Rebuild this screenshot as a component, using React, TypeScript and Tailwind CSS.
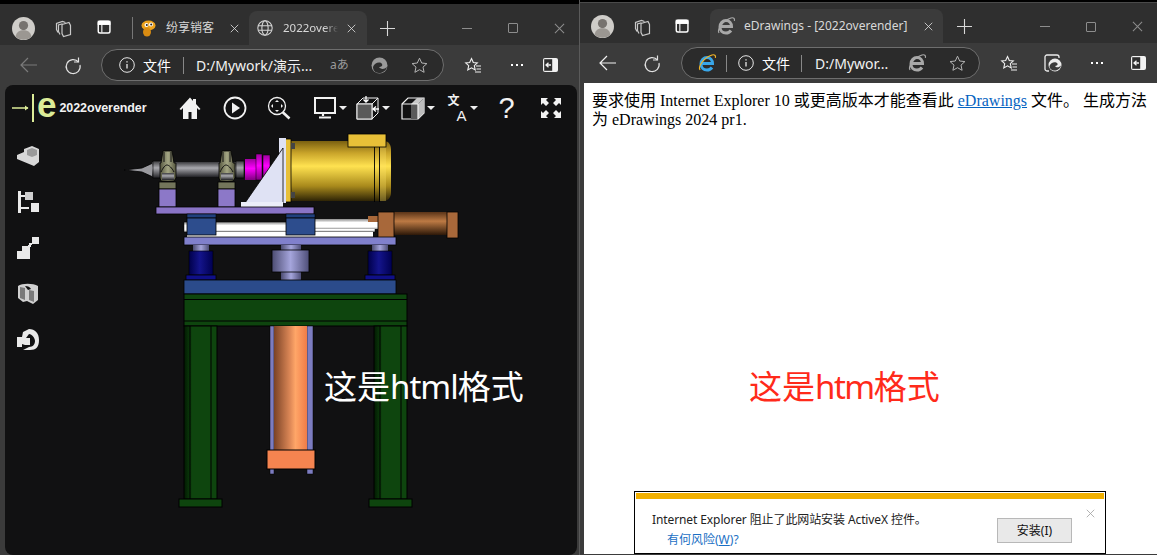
import type { ReactNode } from 'react';

const UI = '"Noto Sans", "Noto Sans CJK SC", sans-serif';

function Svg({ size = 20, children, className = '' }: { size?: number; children: ReactNode; className?: string }) {
  return (
    <svg width={size} height={size} viewBox="0 0 20 20" fill="none" stroke="currentColor" strokeWidth="1.2" className={`shrink-0 ${className}`}>
      {children}
    </svg>
  );
}

function Avatar() {
  return (
    <svg width="23" height="23" viewBox="0 0 23 23" className="shrink-0">
      <circle cx="11.5" cy="11.5" r="11.5" fill="#cfcdc9" />
      <circle cx="11.5" cy="8.6" r="4.6" fill="#77736f" />
      <path d="M3.5 19.5c1-4.8 4.4-6.3 8-6.3s7 1.5 8 6.3a11.5 11.5 0 0 1-16 0z" fill="#9b9792" />
    </svg>
  );
}

const Workspaces = () => (
  <Svg className="text-[#c9c9c9]">
    <path d="M9 6.5l7-2 1.5 3v9l-7 2-1.5-3z" />
    <path d="M5 14.5l-1.5-3v-6l6-2 3 1M7 16.5l-1.500-3v-6.500l4-1.300" />
  </Svg>
);

const VerticalTabs = () => (
  <Svg className="text-white" size={18}>
    <rect x="2.500" y="2.500" width="13" height="13" rx="2" strokeWidth="1.600" />
    <rect x="2.500" y="2.500" width="13" height="3.500" fill="currentColor" />
    <path d="M6.500 5v10" strokeWidth="1.200" />
  </Svg>
);

const CloseX = ({ size = 12, className = '' }: { size?: number; className?: string }) => (
  <svg width={size} height={size} viewBox="0 0 12 12" stroke="currentColor" strokeWidth="1.100" className={`shrink-0 ${className}`}>
    <path d="M1 1l10 10M11 1L1 11" />
  </svg>
);

const Plus = () => (
  <svg width="15" height="15" viewBox="0 0 15 15" stroke="#d8d8d8" strokeWidth="1.100" className="shrink-0">
    <path d="M7.500 0v15M0 7.500h15" />
  </svg>
);

function WindowControls() {
  return (
    <div className="ml-auto flex items-center text-[#8d8d8d]">
      <div className="h-px w-[10px] bg-[#8d8d8d]" />
      <div className="ml-[36px] h-[10px] w-[10px] rounded-[1px] border border-[#8d8d8d]" />
      <CloseX size={11} className="ml-[36px] mr-[14px]" />
    </div>
  );
}

const Back = ({ color }: { color: string }) => (
  <svg width="18" height="16" viewBox="0 0 18 16" fill="none" stroke={color} strokeWidth="1.200" className="shrink-0">
    <path d="M1 8h16M8 1L1 8l7 7" />
  </svg>
);

const Refresh = () => (
  <Svg size={20} className="text-[#e2e2e2]">
    <path d="M15.500 2.500v4.500h-4.500" />
    <path d="M15.500 7A7 7 0 1 0 17 10" />
  </Svg>
);

const Info = () => (
  <svg width="16" height="16" viewBox="0 0 16 16" fill="none" stroke="#e8e8e8" strokeWidth="1" className="shrink-0">
    <circle cx="8" cy="8" r="7.300" />
    <path d="M8 7v4.500M8 4.300v1.200" strokeWidth="1.300" />
  </svg>
);

const Star = () => (
  <svg width="17" height="17" viewBox="0 0 17 17" fill="none" stroke="#b4b4b4" strokeWidth="1" className="shrink-0">
    <path d="M8.500 1.200l2.200 4.800 5.200.6-3.900 3.500 1.100 5.200-4.600-2.600-4.600 2.600 1.100-5.200L1.100 6.600l5.200-.6z" />
  </svg>
);

const Favorites = () => (
  <svg width="18" height="17" viewBox="0 0 18 17" fill="none" stroke="#f0f0f0" strokeWidth="1.100" className="shrink-0">
    <path d="M7.500 1.500l1.800 4 4 .4-3 2.800.9 4.200-3.700-2.100-3.700 2.100.9-4.200-3-2.800 4-.4z" />
    <path d="M12 9h5M12.500 12h4.500M11 15h6" />
  </svg>
);

const Dots = () => (
  <div className="flex shrink-0 gap-[3px]">
    <div className="h-[2px] w-[2px] bg-white" />
    <div className="h-[2px] w-[2px] bg-white" />
    <div className="h-[2px] w-[2px] bg-white" />
  </div>
);

const SidebarToggle = () => (
  <svg width="15" height="14" viewBox="0 0 15 14" className="shrink-0">
    <rect x="0" y="0" width="15" height="14" rx="2" fill="#f2f2f2" />
    <rect x="1.200" y="1.200" width="8" height="11.600" fill="#2e2e2e" />
    <path d="M3 7h5M5.500 4.800L3 7l2.500 2.200" stroke="#f2f2f2" strokeWidth="1.300" fill="none" />
  </svg>
);

const EdgeSwirl = ({ size = 17, color = '#9a9a9a' }: { size?: number; color?: string }) => (
  <svg width={size} height={size} viewBox="0 0 17 17" className="shrink-0">
    <circle cx="8.500" cy="8.500" r="8" fill={color} />
    <path d="M2 10c1-4 7-6 9-3 1 2-1 3-3 3 1 2 5 3 8 0-1 4-5 6-8 6-4 0-6-3-6-6z" fill="#2c2c2c" />
  </svg>
);

const Collections = () => (
  <svg width="20" height="20" viewBox="0 0 20 20" className="shrink-0">
    <path d="M6 18H4a2 2 0 0 1-2-2V4a2 2 0 0 1 2-2h10a2 2 0 0 1 2 2v1" fill="none" stroke="#ececec" strokeWidth="1.300" />
    <circle cx="12" cy="12" r="6.500" fill="#ececec" />
    <path d="M6.500 13c1-3.500 6-5 8-2.500.7 1.600-1 2.500-2.500 2.500 1 1.600 4 2 6-.5-.8 3.500-4 5-6 5-3.500 0-5.500-2-5.500-4.500z" fill="#3b3b3b" />
  </svg>
);

const IeLetter = ({ colored = false }: { colored?: boolean }) => (
  <svg width="20" height="20" viewBox="0 0 20 20" fill="none" className="shrink-0">
    <path d="M4.500 10.500h11c0-3.500-2.300-6-5.500-6s-6 2.700-6 6.500 2.700 6 6 6c2.200 0 3.800-.9 5-2.500" stroke={colored ? '#39a6e8' : '#a8a8a8'} strokeWidth="3" />
    <path d="M3 17C1 14 6 5 15 2c2.500-.8 4 .3 3.400 2.800" stroke={colored ? '#f0b429' : '#a8a8a8'} strokeWidth="1.200" />
  </svg>
);

const Globe = () => (
  <Svg size={18} className="text-[#d4d4d4]">
    <circle cx="10" cy="10" r="8" />
    <ellipse cx="10" cy="10" rx="3.500" ry="8" />
    <path d="M2.500 7.500h15M2.500 12.500h15" />
  </Svg>
);

const Mascot = () => (
  <svg width="16" height="18" viewBox="0 0 16 18" className="shrink-0">
    <ellipse cx="8.500" cy="6.500" rx="7" ry="5" fill="#eda21c" />
    <ellipse cx="7" cy="13" rx="4" ry="4.500" fill="#d98c12" />
    <circle cx="6.500" cy="6" r="2" fill="#fff" />
    <circle cx="11" cy="5.500" r="2" fill="#fff" />
    <circle cx="6.800" cy="6" r="1" fill="#222" />
    <circle cx="11.200" cy="5.500" r="1" fill="#222" />
  </svg>
);

const Caret = () => <div className="ml-[2px] h-0 w-0 border-x-[4px] border-t-[4px] border-x-transparent border-t-[#eee]" />;

function ToolIcon({ children, caret, className = '' }: { children: ReactNode; caret?: boolean; className?: string }) {
  return (
    <div className={`flex items-center ${className}`}>
      {children}
      {caret && <Caret />}
    </div>
  );
}

function CanvasToolbar() {
  return (
    <div className="flex h-[46px] items-center text-[#f2f2f2]">
      <svg width="17" height="8" viewBox="0 0 17 8" fill="none" stroke="#dcec98" strokeWidth="1.300" className="ml-[7px] shrink-0">
        <path d="M0 4h16" />
        <path d="M13 1.500L16.500 4 13 6.500z" fill="#dcec98" stroke="none" />
      </svg>
      <div className="ml-[3px] h-[28px] w-[2px] bg-[#dcec98]" />
      <span className="ml-[3px] text-[35px] leading-none font-bold text-[#dcec98] [font-family:'Liberation_Sans',sans-serif]" style={{ marginTop: -8 }}>
        e
      </span>
      <span className="ml-[3px] w-[87px] text-[12.500px] font-bold tracking-[-0.1px] [font-family:'Liberation_Sans',sans-serif]">2022overender</span>

      <ToolIcon className="ml-[32px]">
        <svg width="24" height="24" viewBox="0 0 24 24" fill="currentColor">
          <path d="M12 1.500L1.500 13l1.500 1L5 12v11h5.500v-7h3v7H19V12l2 2 1.500-1L18 8V3h-3v2z" />
        </svg>
      </ToolIcon>
      <ToolIcon className="ml-[21px]">
        <svg width="24" height="24" viewBox="0 0 24 24" fill="none" stroke="currentColor" strokeWidth="1.800">
          <circle cx="12" cy="12" r="10.500" />
          <path d="M9 6.500l8 5.500-8 5.500z" fill="currentColor" stroke="none" />
        </svg>
      </ToolIcon>
      <ToolIcon className="ml-[20px]">
        <svg width="24" height="24" viewBox="0 0 24 24" fill="none" stroke="currentColor" strokeWidth="1.300">
          <circle cx="10" cy="10" r="8.500" />
          <path d="M15.500 16l7 6.500" strokeWidth="2.600" />
          <path d="M10 4l-2 2h4zM10 16l-2-2h4zM4 10l2-2v4zM16 10l-2-2v4z" fill="currentColor" stroke="none" />
        </svg>
      </ToolIcon>
      <ToolIcon caret className="ml-[23px]">
        <svg width="23" height="22" viewBox="0 0 23 22" fill="none" stroke="currentColor">
          <rect x="1" y="1" width="20" height="15" strokeWidth="2" />
          <path d="M9 16v3M5 20.500h12" strokeWidth="2.200" />
        </svg>
      </ToolIcon>
      <ToolIcon caret className="ml-[9px]">
        <svg width="24" height="24" viewBox="0 0 24 24" fill="none" stroke="currentColor" strokeWidth="1">
          <path d="M1 8h15v15H1zM1 8l6-6h15v15l-6 6M16 8l6-6" />
          <rect x="1" y="8" width="15" height="15" fill="#5a5a5a" />
          <path d="M10 0v6M7.500 3.500L10 6l2.500-2.500M23 13h-6M20 10.500L17 13l3 2.500" strokeWidth="1.300" stroke="#fff" />
        </svg>
      </ToolIcon>
      <ToolIcon caret className="ml-[11px]">
        <svg width="24" height="24" viewBox="0 0 24 24" fill="none" stroke="currentColor" strokeWidth="1.200">
          <path d="M1 8l6-6h16v15l-6 6H1z" />
          <path d="M10 8h7v15h-7z" fill="#5a5a5a" stroke="none" />
          <path d="M17 8l6-6v15l-6 6z" fill="#bdbdbd" stroke="none" />
          <path d="M10 8l6-6h7l-6 6z" fill="#c8c8c8" stroke="none" />
          <path d="M1 8h16v15" />
        </svg>
      </ToolIcon>
      <ToolIcon caret className="ml-[12px]">
        <span className="relative block h-[24px] w-[21px]" style={{ fontFamily: UI }}>
          <span className="absolute top-[-2px] left-0 text-[12px] leading-[14px] font-bold">文</span>
          <span className="absolute bottom-[-3px] left-[9px] text-[15px] leading-[15px] [font-family:'Liberation_Sans',sans-serif]">A</span>
        </span>
      </ToolIcon>
      <span className="ml-[20px] text-[29px] leading-none [font-family:'Liberation_Sans',sans-serif]">?</span>
      <ToolIcon className="ml-[26px]">
        <svg width="20" height="20" viewBox="0 0 20 20" fill="currentColor">
          <path d="M0 0h7L5 2l3 3-3 3-3-3-2 2zM20 0v7l-2-2-3 3-3-3 3-3-2-2zM0 20v-7l2 2 3-3 3 3-3 3 2 2zM20 20h-7l2-2-3-3 3-3 3 3 2-2z" />
        </svg>
      </ToolIcon>
    </div>
  );
}

function SideIcons() {
  return (
    <div className="box-content flex w-[22px] flex-col items-center gap-[24px] pt-[14px] pl-[12px] text-[#e9e9e9]">
      <svg width="22" height="22" viewBox="0 0 22 22" fill="currentColor">
        <path d="M0 10l7-3V4l8-3 7 3v13l-5 4L0 14z" fill="#d8d8d8" />
        <path d="M10 5l5-2 5 2v5l-5 2-5-2z" fill="#9a9a9a" />
      </svg>
      <svg width="22" height="22" viewBox="0 0 22 22" fill="currentColor">
        <path d="M1 0h3v4h4v2H4v10h8v2H4v4H1z" />
        <path d="M8 1h8v8H8z" fill="#cfcfcf" />
        <path d="M14 12h8v9h-8z" />
      </svg>
      <svg width="22" height="22" viewBox="0 0 22 22" fill="currentColor">
        <path d="M0 14h5v-5h8v13H0z" />
        <path d="M15 0h7v7h-7zM12 6h3v2h-1v2h-3V8h1z" />
      </svg>
      <svg width="22" height="22" viewBox="0 0 22 22">
        <path d="M1 3c4-3 15-3 20 0v14l-5 4-6-3-4 1-5-4z" fill="#d0d0d0" />
        <path d="M3 4l5 1v12l-5-2zM12 7l5 1v11l-5-2z" fill="#7a7a7a" />
        <path d="M8 3c3 0 5 1 6 3l-3 1z" fill="#111" />
      </svg>
      <svg width="22" height="22" viewBox="0 0 22 22" fill="currentColor">
        <path d="M0 8h5l1-5 6-3c6 0 10 4 10 11s-3 10-9 10H6l6-3c4 0 6-3 6-6s-3-7-6-7l-3 4h4v7H8l-3-1v3H0z" />
      </svg>
    </div>
  );
}

function Machine() {
  const dark = '#000';
  return (
    <svg className="absolute top-0 left-0" width="572" height="470" viewBox="5 85 572 470">
      <defs>
        <linearGradient id="gold" x1="0" y1="0" x2="0" y2="1">
          <stop offset="0" stopColor="#7a6010" />
          <stop offset=".2" stopColor="#c9a42a" />
          <stop offset=".42" stopColor="#ffe250" />
          <stop offset=".75" stopColor="#a98a1c" />
          <stop offset="1" stopColor="#2e2406" />
        </linearGradient>
        <linearGradient id="steel" x1="0" y1="0" x2="0" y2="1">
          <stop offset="0" stopColor="#3b3b3e" />
          <stop offset=".4" stopColor="#a9a9ae" />
          <stop offset="1" stopColor="#222226" />
        </linearGradient>
        <linearGradient id="magenta" x1="0" y1="0" x2="0" y2="1">
          <stop offset="0" stopColor="#a000a0" />
          <stop offset=".45" stopColor="#ff00ff" />
          <stop offset="1" stopColor="#800080" />
        </linearGradient>
        <linearGradient id="white" x1="0" y1="0" x2="0" y2="1">
          <stop offset="0" stopColor="#8a8a8a" />
          <stop offset=".35" stopColor="#ffffff" />
          <stop offset=".8" stopColor="#ffffff" />
          <stop offset="1" stopColor="#9a9a9a" />
        </linearGradient>
        <linearGradient id="copper" x1="0" y1="0" x2="0" y2="1">
          <stop offset="0" stopColor="#5a3418" />
          <stop offset=".4" stopColor="#bd7a44" />
          <stop offset="1" stopColor="#2c1808" />
        </linearGradient>
        <linearGradient id="navy" x1="0" y1="0" x2="1" y2="0">
          <stop offset="0" stopColor="#00004a" />
          <stop offset=".45" stopColor="#14148c" />
          <stop offset="1" stopColor="#000050" />
        </linearGradient>
        <linearGradient id="lilac" x1="0" y1="0" x2="1" y2="0">
          <stop offset="0" stopColor="#4c4c72" />
          <stop offset=".5" stopColor="#a5a5dc" />
          <stop offset="1" stopColor="#4e4e78" />
        </linearGradient>
        <linearGradient id="orange" x1="0" y1="0" x2="1" y2="0">
          <stop offset="0" stopColor="#7a4226" />
          <stop offset=".5" stopColor="#e08a58" />
          <stop offset=".65" stopColor="#ffa668" />
          <stop offset="1" stopColor="#f07c48" />
        </linearGradient>
        <linearGradient id="greenV" x1="0" y1="0" x2="1" y2="0">
          <stop offset="0" stopColor="#021a02" />
          <stop offset=".25" stopColor="#0e450e" />
          <stop offset="1" stopColor="#0e450e" />
        </linearGradient>
        <linearGradient id="olive" x1="0" y1="0" x2="1" y2="0">
          <stop offset="0" stopColor="#55563f" />
          <stop offset=".5" stopColor="#a4a684" />
          <stop offset="1" stopColor="#55563f" />
        </linearGradient>
      </defs>

      {/* spindle */}
      <path d="M124 170l18-2 11-5v14l-11-5z" fill="#9a9a9f" stroke={dark} strokeWidth=".8" />
      <rect x="152" y="162" width="92" height="15" fill="url(#steel)" />
      <rect x="153" y="161" width="10" height="17" fill="url(#steel)" stroke={dark} strokeWidth=".6" />
      <rect x="236" y="161" width="8" height="17" fill="url(#steel)" stroke={dark} strokeWidth=".6" />
      <rect x="245" y="159" width="11" height="21" fill="url(#magenta)" />
      <rect x="256" y="154" width="6" height="26" fill="url(#magenta)" stroke={dark} strokeWidth=".5" />
      <rect x="263" y="155" width="7" height="24" fill="url(#magenta)" stroke={dark} strokeWidth=".5" />

      {/* bearing blocks */}
      {[160, 219].map((x) => (
        <g key={x}>
          <path d={`M${x + 3} 151h9l2 12h2v15l-2 3h-13l-1-3v-15h1z`} fill="url(#olive)" stroke={dark} strokeWidth=".8" />
          <path d={`M${x + 1} 172c2-4 4-7 6-7s5 3 7 7M${x + 4} 152v10M${x + 11} 152v10`} fill="none" stroke="#111" strokeWidth="1" />
          <rect x={x + 2} y="173" width="12" height="7" fill="url(#steel)" />
          <rect x={x - 1} y="182" width="17" height="7" fill="#73755b" stroke={dark} strokeWidth=".8" />
          <rect x={x - 1} y="189" width="17" height="18" fill="#8c78c8" stroke={dark} strokeWidth=".8" />
        </g>
      ))}

      {/* motor */}
      <path d="M290 141h94c5 0 7 4 7 9v43c0 5-4 8-7 8h-94z" fill="url(#gold)" />
      <rect x="380" y="141" width="6" height="60" fill="#ffe36b" opacity=".3" />
      <path d="M374.500 147v55M379.500 147v55" stroke={dark} strokeWidth=".9" />
      <rect x="348" y="134" width="38" height="13" fill="#e8c038" stroke={dark} strokeWidth=".8" />
      <rect x="285" y="139" width="6" height="63" fill="#e8c038" stroke={dark} strokeWidth=".8" />
      <rect x="279" y="138" width="7" height="65" fill="#dfe2f4" />
      <rect x="291" y="143" width="4" height="6" fill="#444" />
      <rect x="291" y="192" width="4" height="6" fill="#444" />
      <path d="M245 203l38-55v55z" fill="#dfe2f4" stroke={dark} strokeWidth=".8" />
      <rect x="241" y="202" width="42" height="5" fill="#eceef9" />

      {/* slide */}
      <rect x="156" y="207" width="158" height="7" fill="#8a74c6" stroke={dark} strokeWidth=".8" />
      <rect x="184" y="222" width="191" height="10" fill="url(#white)" stroke={dark} strokeWidth=".5" />
      <rect x="187" y="232" width="186" height="5" fill="#fff" />
      <rect x="314" y="219" width="64" height="10" fill="url(#white)" />
      <rect x="368" y="216" width="10" height="6" fill="#a8683a" />
      <rect x="378" y="212" width="80" height="23" fill="url(#copper)" />
      <rect x="378" y="212" width="16" height="26" fill="#a8683a" stroke={dark} strokeWidth=".8" />
      <rect x="447" y="212" width="11" height="26" fill="#a8683a" stroke={dark} strokeWidth=".8" />
      {[187, 286].map((x) => (
        <g key={x}>
          <rect x={x} y="214" width="29" height="4" fill="#20407e" stroke={dark} strokeWidth=".6" />
          <rect x={x} y="218" width="29" height="17" fill="#2d4d8d" stroke={dark} strokeWidth=".8" />
        </g>
      ))}
      <rect x="184" y="237" width="212" height="8" fill="#8080cc" stroke={dark} strokeWidth=".8" />

      {/* lift columns */}
      {[189, 368].map((x) => (
        <g key={x}>
          <rect x={x + 4} y="245" width="16" height="6" fill="url(#lilac)" />
          <rect x={x} y="251" width="24" height="24" fill="url(#navy)" stroke={dark} strokeWidth=".6" />
          <rect x={x - 3} y="275" width="30" height="5" fill="#0f0f88" stroke={dark} strokeWidth=".8" />
        </g>
      ))}
      <rect x="281" y="245" width="20" height="35" fill="url(#lilac)" />
      <rect x="272" y="250" width="37" height="22" fill="url(#lilac)" stroke={dark} strokeWidth=".8" />
      <rect x="184" y="280" width="212" height="14" fill="#2b4b8b" stroke={dark} strokeWidth=".8" />

      {/* frame */}
      <rect x="184" y="294" width="223" height="32" fill="#0e450e" stroke={dark} />
      <path d="M184 299.500h223M184 321h223" stroke={dark} />
      {[184, 374].map((x) => (
        <g key={x}>
          <rect x={x} y="326" width="33" height="173" fill="url(#greenV)" stroke={dark} />
          <path d={`M${x + 6} 326v173M${x + 27} 326v173`} stroke={dark} />
          <rect x={x - 5} y="499" width="43" height="8" fill="#0e450e" stroke={dark} />
        </g>
      ))}
      <rect x="270" y="326" width="4" height="148" fill="#7c7cc0" stroke={dark} strokeWidth=".5" />
      <rect x="307" y="326" width="6" height="148" fill="#7c7cc0" stroke={dark} strokeWidth=".5" />
      <rect x="274" y="326" width="33" height="124" fill="url(#orange)" />
      <rect x="267" y="450" width="48" height="19" fill="#f58450" stroke={dark} />
    </svg>
  );
}

function LeftWindow() {
  return (
    <div className="flex h-full w-[579px] flex-col pt-[4px]">
      <div className="flex h-[41px] items-center bg-[#2f2f2f] pt-[7px]">
        <div className="ml-[12px]"><Avatar /></div>
        <div className="ml-[18px]"><Workspaces /></div>
        <div className="ml-[23px]"><VerticalTabs /></div>
        <div className="ml-[18px] h-[22px] w-px bg-[#777]" />
        <div className="ml-[7px]"><Mascot /></div>
        <span className="ml-[10px] text-[12px] text-[#d8d8d8]">纷享销客</span>
        <CloseX size={9} className="ml-[16px] text-[#ddd]" />
        <div className="ml-[10px] flex h-[34px] w-[118px] items-center self-end rounded-t-lg bg-[#3b3b3b] pl-[7px]">
          <Globe />
          <span className="ml-[9px] w-[55px] text-[11.500px] whitespace-nowrap text-[#d8d8d8] [mask-image:linear-gradient(to_right,#000_75%,transparent)]">2022overe</span>
          <CloseX size={9} className="ml-[9px] text-[#ddd]" />
        </div>
        <div className="ml-[13px]"><Plus /></div>
        <WindowControls />
      </div>

      <div className="flex h-[40px] items-center bg-[#3b3b3b]">
        <div className="ml-[20px]"><Back color="#7b7b7b" /></div>
        <div className="ml-[25px]"><Refresh /></div>
        <div className="ml-[18px] flex h-[32px] w-[343px] items-center rounded-full border border-[#6e6e6e] bg-[#2b2b2b] pl-[17px]">
          <Info />
          <span className="ml-[8px] text-[14px] text-white">文件</span>
          <div className="ml-[12px] h-[17px] w-px bg-[#888]" />
          <span className="ml-[12px] w-[112px] text-[14px] whitespace-nowrap text-[#f2f2f2]">D:/Mywork/演示...</span>
          <span className="ml-[22px] w-[21px] text-[12px] text-[#9a9a9a]">aあ</span>
          <div className="ml-[20px]"><EdgeSwirl /></div>
          <div className="ml-[23px]"><Star /></div>
        </div>
        <div className="ml-[20px]"><Favorites /></div>
        <div className="ml-[29px]"><Dots /></div>
        <div className="ml-[20px]"><SidebarToggle /></div>
      </div>

      <div className="min-h-0 flex-1 bg-[#3b3b3b] pr-[2px] pl-[5px]">
        <div className="relative h-full overflow-hidden rounded-lg bg-[#111112]">
          <Machine />
          <div className="relative">
            <CanvasToolbar />
            <SideIcons />
          </div>
          <span className="absolute top-[279px] left-[319px] text-[33px] leading-[46px] whitespace-nowrap text-white">
            这是<span className="tracking-[-1px]">html</span>格式
          </span>
        </div>
      </div>
    </div>
  );
}

function RightWindow() {
  return (
    <div className="flex h-full flex-1 flex-col border-l border-[#5a5a5a] pt-[2px]">
      <div className="flex h-[41px] items-center border-t border-[#4a4a4a] bg-[#2f2f2f] pt-[7px]">
        <div className="ml-[11px]"><Avatar /></div>
        <div className="ml-[18px]"><Workspaces /></div>
        <div className="ml-[22px]"><VerticalTabs /></div>
        <div className="ml-[18px] flex h-[34px] w-[233px] items-center self-end rounded-t-lg bg-[#3b3b3b] pl-[6px]">
          <IeLetter />
          <span className="ml-[8px] text-[12px] whitespace-nowrap text-[#d8d8d8]">eDrawings - [2022overender]</span>
          <CloseX size={9} className="ml-auto mr-[10px] text-[#ddd]" />
        </div>
        <div className="ml-[14px]"><Plus /></div>
        <WindowControls />
      </div>

      <div className="flex h-[40px] items-center bg-[#3b3b3b]">
        <div className="ml-[19px]"><Back color="#f2f2f2" /></div>
        <div className="ml-[25px]"><Refresh /></div>
        <div className="ml-[19px] flex h-[32px] w-[299px] items-center rounded-full border border-[#6e6e6e] bg-[#2b2b2b] pl-[15px]">
          <IeLetter colored />
          <div className="ml-[9px] h-[17px] w-px bg-[#888]" />
          <div className="ml-[11px]"><Info /></div>
          <span className="ml-[8px] text-[14px] text-white">文件</span>
          <div className="ml-[11px] h-[17px] w-px bg-[#888]" />
          <span className="ml-[13px] w-[72px] text-[14px] whitespace-nowrap text-[#f2f2f2]">D:/Mywor...</span>
          <div className="ml-[20px]"><IeLetter /></div>
          <div className="ml-[22px]"><Star /></div>
        </div>
        <div className="ml-[20px]"><Favorites /></div>
        <div className="ml-[25px]"><Collections /></div>
        <div className="ml-[28px]"><Dots /></div>
        <div className="ml-[28px]"><SidebarToggle /></div>
      </div>

      <div className="min-h-0 flex-1 bg-[#3b3b3b] pl-[4px]">
        <div className="relative h-[471px] bg-white pt-[8px] pr-[8px] pl-[8px]">
          <p className="text-[16px] leading-[19px] text-black" style={{ fontFamily: '"Liberation Serif", "Noto Sans CJK SC", serif' }}>
            要求使用 Internet Explorer 10 或更高版本才能查看此{' '}
            <span className="text-[#0563c1] underline">eDrawings</span> 文件。 生成方法为 eDrawings 2024 pr1.
          </p>
          <span className="absolute top-[281px] left-[165px] text-[33px] leading-[46px] whitespace-nowrap text-[#ff2a1a]">
            这是<span className="tracking-[-1.500px]">htm</span>格式
          </span>

          <div className="absolute top-[408px] left-[50px] h-[63px] w-[472px] border border-black bg-white p-px">
            <div className="h-[6px] bg-[#f2b000]" />
            <div className="flex items-start justify-between pt-[12px] pr-[32px] pl-[16px] text-[12px] leading-[18px]">
              <div>
                <div className="text-[#222] tracking-[-0.1px]">Internet Explorer 阻止了此网站安装 ActiveX 控件。</div>
                <div className="mt-[2px] ml-[15px] text-[#1a6fc4]">有何风险(<span className="underline">W</span>)?</div>
              </div>
              <div className="mt-[7px] flex h-[25px] w-[75px] items-center justify-center border border-[#b8b8b8] bg-[#e9e9e9] text-[#111]">安装(I)</div>
            </div>
            <CloseX size={9} className="absolute top-[17px] right-[10px] text-[#a3a3a3]" />
          </div>
        </div>
      </div>
    </div>
  );
}

export default function App() {
  return (
    <div className="flex h-[555px] w-[1157px] overflow-hidden bg-black" style={{ fontFamily: UI }}>
      <LeftWindow />
      <RightWindow />
    </div>
  );
}
